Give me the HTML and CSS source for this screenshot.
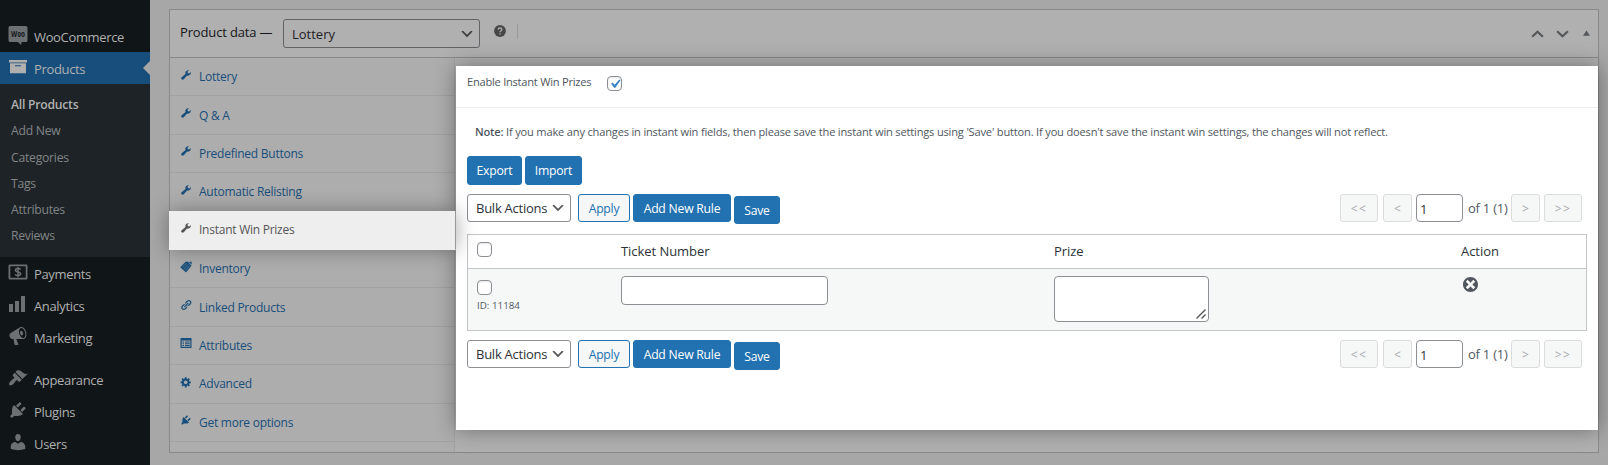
FILE: index.html
```html
<!DOCTYPE html>
<html lang="en">
<head>
<meta charset="utf-8">
<title>Edit product</title>
<link rel="stylesheet" href="styles.css">
</head>
<body>
<svg class="defs" width="0" height="0">
  <symbol id="wrench" viewBox="0 0 20 20"><path d="M16.68 9.77c-1.34 1.34-3.3 1.67-4.95.99l-5.41 6.52c-.99.99-2.59.99-3.58 0s-.99-2.59 0-3.57l6.52-5.42c-.68-1.65-.35-3.61.99-4.95 1.28-1.28 3.12-1.62 4.72-1.06l-2.89 2.89 2.82 2.82 2.86-2.87c.53 1.58.18 3.39-1.08 4.65z"/></symbol>
  <symbol id="plug" viewBox="0 0 20 20"><path d="M13.11 4.36L9.87 7.6 8 5.73l3.24-3.24c.35-.34 1.05-.2 1.56.32.52.51.66 1.21.31 1.55zm-8 1.77l.91-1.12 9.01 9.01-1.19.84c-.71.71-2.63 1.16-3.82 1.16H6.14L4.9 17.26c-.59.59-1.54.59-2.12 0-.59-.58-.59-1.53 0-2.12l1.24-1.24v-3.88c0-1.13.4-3.19 1.09-3.89zm7.26 3.97l3.24-3.24c.34-.35 1.04-.21 1.55.31.52.51.66 1.21.31 1.55l-3.24 3.25z"/></symbol>
  <symbol id="chev" viewBox="0 0 20 20"><path d="M5 6l5 5 5-5 2 1-7 7-7-7 2-1z"/></symbol>
</svg>
<nav class="menu">
  <a class="item"><svg class="ico" viewBox="0 0 20 20"><path d="M2.200 1h15.600C18.600 1 19.500 1.700 19.500 2.800v12.400c0 1-.8 1.800-1.700 1.800h-4.300l-.4 3-3.300-3H2.200C1.200 17 .5 16.200.5 15.200V2.800C.5 1.700 1.200 1 2.200 1z"/><text class="woo" x="10" y="11.800" textLength="14" lengthAdjust="spacingAndGlyphs">Woo</text></svg><span>WooCommerce</span></a>
  <a class="item current"><svg class="ico" viewBox="0 0 20 20"><path d="M19 3v2.500H1V3h18zM2 6.300h16v10H2v-10zm11 3V8.300H7v1h6z"/></svg><span>Products</span></a>
  <div class="submenu">
    <a class="on">All Products</a><a>Add New</a><a>Categories</a><a>Tags</a><a>Attributes</a><a>Reviews</a>
  </div>
  <a class="item"><svg class="ico" viewBox="0 0 20 20"><path fill-rule="evenodd" d="M2 2.500h16c.8 0 1.500.7 1.500 1.500v12c0 .8-.7 1.500-1.500 1.500H2c-.8 0-1.500-.7-1.500-1.500V4c0-.8.700-1.500 1.500-1.500zM2.300 4.300v11.400h15.400V4.300z"/><path class="line" d="M12.600 7.600c-.5-.8-1.500-1-2.600-1-1.500 0-2.600.6-2.600 1.700 0 2.400 5.300 1 5.300 3.500 0 1.100-1.200 1.700-2.700 1.700-1.300 0-2.300-.4-2.800-1.200M10 5v10.200"/></svg><span>Payments</span></a>
  <a class="item"><svg class="ico" viewBox="0 0 20 20"><path d="M17 18V2h-4v16h4zm-6 0V7H7v11h4zm-6 0v-8H1v8h4z"/></svg><span>Analytics</span></a>
  <a class="item"><svg class="ico" viewBox="0 0 20 20"><path d="M18.150 5.940c.46 1.620.38 3.220-.02 4.480-.42 1.280-1.260 2.180-2.300 2.480-.16.060-.26.060-.4.060-.06.020-.12.020-.18.020-.06.020-.14.020-.22.020h-6.800l2.220 5.500c.02.140-.06.260-.14.340-.08.100-.24.160-.34.160H6.950c-.1 0-.26-.06-.34-.16-.08-.08-.16-.2-.14-.34l-1-5.500H4.250l-.02-.02c-.5.060-1.080-.18-1.540-.62s-.88-1.080-1.060-1.880c-.24-.8-.2-1.560-.02-2.200.18-.62.58-1.080 1.060-1.300l.02-.02 9-5.400c.1-.06.18-.1.24-.16.06-.04.14-.08.24-.12.16-.08.28-.12.5-.18 1.040-.3 2.240.1 3.220.98s1.840 2.240 2.260 3.860zm-2.580 5.980h-.02c.4-.1.740-.34 1.040-.7.580-.7.860-1.760.86-3.040 0-.64-.1-1.300-.28-1.980-.34-1.360-1.020-2.500-1.780-3.240s-1.680-1.100-2.460-.88c-.82.220-1.400.96-1.700 2-.32 1.040-.28 2.360.06 3.720.38 1.360 1 2.500 1.800 3.240.78.740 1.620 1.100 2.480.88zm-2.540-7.080c.22-.04.42-.02.62.04.38.16.76.48 1.020 1s.42 1.200.42 1.780c0 .3-.04.56-.12.8-.18.48-.44.84-.86.94-.34.1-.8-.06-1.140-.4s-.64-.86-.78-1.500c-.18-.62-.12-1.240.02-1.720s.48-.84.82-.94z"/></svg><span>Marketing</span></a>
  <a class="item gap"><svg class="ico" viewBox="0 0 20 20"><path d="M14.480 11.060L7.410 3.990l1.500-1.500c.5-.56 2.300-.47 3.510.32 1.210.8 1.430 1.280 2.910 2.100 1.180.64 2.450 1.260 4.450.85zm-.71.71L6.700 4.700 4.930 6.470c-.39.39-.39 1.020 0 1.410l1.060 1.060c.39.39.39 1.030 0 1.420-.6.6-1.430 1.110-2.210 1.690-.35.260-.7.530-1.010.84C1.430 14.230.4 16.080 1.400 17.070c.99 1 2.840-.03 4.180-1.360.31-.31.58-.66.85-1.020.57-.78 1.080-1.610 1.690-2.210.39-.39 1.020-.39 1.410 0l1.060 1.060c.39.39 1.020.39 1.410 0z"/></svg><span>Appearance</span></a>
  <a class="item"><svg class="ico"><use href="#plug"/></svg><span>Plugins</span></a>
  <a class="item"><svg class="ico" viewBox="0 0 20 20"><path d="M10 9.250c-2.270 0-2.730-3.440-2.730-3.440C7 4.020 7.820 2 9.970 2c2.160 0 2.980 2.020 2.710 3.810 0 0-.41 3.440-2.680 3.440zm0 2.570L12.720 10c2.390 0 4.520 2.330 4.520 4.530v2.490s-3.650 1.130-7.240 1.130c-3.650 0-7.240-1.130-7.240-1.130v-2.490c0-2.250 1.940-4.480 4.470-4.480z"/></svg><span>Users</span></a>
</nav>
<main class="content">
  <section class="postbox">
    <header class="head">
      <span class="title">Product data —</span>
      <div class="select type"><span>Lottery</span><svg><use href="#chev"/></svg></div>
      <svg class="help" viewBox="0 0 12 12"><circle cx="6" cy="6" r="5.900"/><path d="M4.200 4.800C4.200 3.500 5 3 6 3s1.900.6 1.900 1.600C7.900 5.800 6 5.700 6 7.200M6 8.300v1.300"/></svg>
      <i class="sep"></i>
      <div class="handles">
        <svg viewBox="0 0 14 8"><path d="M1.200 7L7 1.600 12.800 7"/></svg>
        <svg viewBox="0 0 14 8"><path d="M1.200 1L7 6.400 12.800 1"/></svg>
        <svg class="tri" viewBox="0 0 8 6"><path d="M4 0l4 6H0z"/></svg>
      </div>
    </header>
    <div class="body">
      <ul class="tabs">
        <li><svg><use href="#wrench"/></svg><span>Lottery</span></li>
        <li><svg><use href="#wrench"/></svg><span>Q &amp; A</span></li>
        <li><svg><use href="#wrench"/></svg><span>Predefined Buttons</span></li>
        <li><svg><use href="#wrench"/></svg><span>Automatic Relisting</span></li>
        <li class="active"><svg><use href="#wrench"/></svg><span>Instant Win Prizes</span></li>
        <li><svg viewBox="0 0 12 12"><path d="M.2 6.300L5.600.8l2.100-.2L11.500 4.700 6 11.500zM8.700 1l2.800-.6.400 3.300z"/><path class="hatch" d="M2.200 6.300l4.200-4.200M3.700 8l4.500-4.600M5.200 9.600l4.500-4.800"/></svg><span>Inventory</span></li>
        <li><svg viewBox="0 0 20 20"><path d="M17.740 2.760c1.680 1.690 1.680 4.410 0 6.100l-1.530 1.520c-1.120 1.120-2.700 1.470-4.140 1.090l2.620-2.610.76-.77.76-.76c.84-.84.84-2.200 0-3.040-.84-.85-2.200-.85-3.040 0l-.77.76-3.380 3.380c-.37-1.440-.02-3.020 1.100-4.140l1.520-1.530c1.690-1.680 4.420-1.680 6.100 0zM8.590 13.430l5.340-5.340c.42-.42.42-1.100 0-1.520-.44-.43-1.130-.39-1.530 0l-5.330 5.340c-.42.42-.42 1.100 0 1.520.44.43 1.130.39 1.520 0zm-.76 2.290l4.140-4.150c.38 1.440.03 3.020-1.090 4.140l-1.520 1.530c-1.690 1.680-4.410 1.680-6.100 0-1.680-1.680-1.680-4.420 0-6.100l1.530-1.520c1.120-1.120 2.700-1.470 4.140-1.100l-4.140 4.150c-.85.84-.85 2.200 0 3.050.84.84 2.200.84 3.040 0z"/></svg><span>Linked Products</span></li>
        <li><svg viewBox="0 0 12 12"><path fill-rule="evenodd" d="M.5 1h11v10H.500zM1.700 3.600v6.200h8.600V3.600zM2.500 4.500H4v1H2.500zM5 4.500h4.700v1H5zM2.500 6.200H4v1H2.500zM5 6.200h4.700v1H5zM2.500 7.900H4v1H2.500zM5 7.900h4.700v1H5z"/></svg><span>Attributes</span></li>
        <li><svg viewBox="0 0 20 20"><path d="M18 12h-2.180c-.17.7-.44 1.350-.81 1.930l1.540 1.540-2.100 2.100-1.540-1.540c-.58.360-1.230.630-1.910.79V19H8v-2.180c-.68-.16-1.330-.43-1.910-.79l-1.540 1.540-2.120-2.120 1.540-1.540c-.36-.58-.63-1.230-.79-1.910H1V9.030h2.170c.16-.7.44-1.350.8-1.940L2.430 5.550l2.100-2.100 1.540 1.540c.58-.37 1.240-.64 1.930-.81V2h3v2.180c.68.160 1.330.43 1.910.79l1.540-1.540 2.120 2.120-1.540 1.540c.36.590.64 1.240.8 1.940H18V12zm-8.500 1.500c1.660 0 3-1.340 3-3s-1.340-3-3-3-3 1.340-3 3 1.340 3 3 3z"/></svg><span>Advanced</span></li>
        <li><svg><use href="#plug"/></svg><span>Get more options</span></li>
      </ul>
      <div class="panel">
        <div class="enable"><label>Enable Instant Win Prizes</label><span class="check"><svg viewBox="0 0 20 20"><path d="M14.830 4.890l1.340.94-5.810 8.380H9.020L5.780 9.670l1.340-1.250 2.570 2.400z"/></svg></span></div>
        <p class="note"><b>Note:</b> If you make any changes in instant win fields, then please save the instant win settings using 'Save' button. If you doesn't save the instant win settings, the changes will not reflect.</p>
        <div class="io"><button class="btn primary export">Export</button><button class="btn primary import">Import</button></div>
        <div class="bar">
          <div class="select bulk"><span>Bulk Actions</span><svg><use href="#chev"/></svg></div>
          <button class="btn apply">Apply</button><button class="btn primary add">Add New Rule</button><button class="btn primary save">Save</button>
          <div class="pages"><span class="pg wide">&lt;&lt;</span><span class="pg prev">&lt;</span><span class="num">1</span><span class="of">of 1 (1)</span><span class="pg next">&gt;</span><span class="pg wide">&gt;&gt;</span></div>
        </div>
        <div class="table">
          <div class="tr th"><div><span class="check"></span></div><div>Ticket Number</div><div>Prize</div><div>Action</div></div>
          <div class="tr td"><div><span class="check"></span><small>ID: 11184</small></div><div><span class="field"></span></div><div><span class="area"><svg viewBox="0 0 10 10"><path d="M.5 9.500l9-9M5.500 9.500l4-4"/></svg></span></div><div><svg class="del" viewBox="2 2 16 16"><path d="M10 2c4.420 0 8 3.580 8 8s-3.580 8-8 8-8-3.580-8-8 3.580-8 8-8zm5 11l-3-3 3-3-2-2-3 3-3-3-2 2 3 3-3 3 2 2 3-3 3 3z"/></svg></div></div>
        </div>
        <div class="bar">
          <div class="select bulk"><span>Bulk Actions</span><svg><use href="#chev"/></svg></div>
          <button class="btn apply">Apply</button><button class="btn primary add">Add New Rule</button><button class="btn primary save">Save</button>
          <div class="pages"><span class="pg wide">&lt;&lt;</span><span class="pg prev">&lt;</span><span class="num">1</span><span class="of">of 1 (1)</span><span class="pg next">&gt;</span><span class="pg wide">&gt;&gt;</span></div>
        </div>
      </div>
    </div>
  </section>
</main>
</body>
</html>
```
FILE: styles.css
```css
* { box-sizing: border-box; }
body {
  margin: 0;
  height: 465px;
  overflow: hidden;
  display: flex;
  background: #a7a7a7;
  font: 13px/18px "Open Sans", "Noto Sans", sans-serif;
}
.defs { position: absolute; }
span, label { white-space: nowrap; }

/* Admin menu */
.menu { width: 150px; height: 465px; flex: none; background: #101517; padding-top: 20px; }
.item { position: relative; display: flex; align-items: center; height: 32px; padding-left: 8px; gap: 6px; color: #afb0b0; letter-spacing: -.35px; }
.item span { padding-top: 1px; }
.item.gap { margin-top: 10px; }
.ico { width: 20px; height: 20px; fill: #6d7073; flex: none; margin-top: -3px; }
.ico .line { fill: none; stroke: #6d7073; stroke-width: 1.5; }
.ico .woo { fill: #15191b; font-size: 8px; font-weight: 700; text-anchor: middle; letter-spacing: 0; }
.current { background: #184e7b; }
.current .ico { fill: #b0b0b0; }
.current::after {
  content: "";
  position: absolute;
  right: 0;
  top: 9px;
  border: 7.500px solid transparent;
  border-right-color: #a7a7a7;
  border-left: 0;
}
.submenu { background: #1d2326; height: 173px; padding: 8px 0 0 11px; display: flex; flex-direction: column; letter-spacing: -.25px; }
.submenu a { height: 26.300px; line-height: 26.300px; font-size: 12.200px; color: #818587; }
.submenu .on { color: #b0b0b0; font-weight: 600; }

/* Product data box */
.content { flex: 1; min-width: 0; padding: 9px 9px 0 19px; }
.postbox { height: 444px; border: 1px solid #898989; background: #b0b0b0; display: flex; flex-direction: column; }
.head { height: 48px; flex: none; border-bottom: 1px solid #898989; display: flex; align-items: center; padding: 0 8px 0 10px; }
.title { width: 103px; font-weight: 500; color: #141618; padding-bottom: 4px; letter-spacing: -.15px; }
.select { display: flex; align-items: center; justify-content: space-between; border: 1px solid #8c8f94; border-radius: 3px; padding-left: 8px; }
.select svg { width: 16px; height: 16px; fill: #555; }
.type { width: 197px; height: 29px; border-color: #616366; color: #1e2124; padding-right: 4px; }
.type svg { fill: #3c3c3c; }
.help { width: 12px; height: 12px; margin: -5px 0 0 14px; fill: #464646; }
.help path { fill: none; stroke: #b0b0b0; stroke-width: 1.300; }
.sep { width: 1px; height: 15px; background: #989898; margin: -4px 0 0 11px; }
.handles { margin-left: auto; display: flex; align-items: center; }
.handles svg { width: 13px; height: 8px; margin-left: 12px; fill: none; stroke: #55585b; stroke-width: 2.400; }
.handles .tri { width: 7px; height: 6px; margin-left: 14px; fill: #55585b; stroke: none; margin-top: -1px; }

.body { flex: 1; display: flex; min-height: 0; }
.tabs { list-style: none; margin: 0; padding: 0; width: 285px; flex: none; border-right: 1px solid #a3a3a3; background: #adadad; }
.tabs li {
  height: 38.400px;
  border-bottom: 1px solid #a2a2a2;
  display: flex;
  align-items: center;
  padding: 1px 0 0 10px;
  gap: 7px;
  font-size: 12px;
  letter-spacing: -.25px;
  color: #184e7b;
}
.tabs svg { width: 12px; height: 12px; margin-top: -5px; fill: #184e7b; }
.tabs .hatch { fill: none; stroke: #7b90a3; stroke-width: .6; }
.tabs .active {
  position: relative;
  z-index: 2;
  width: 287px;
  height: 39px;
  margin: -.6px 0 0 -1px;
  padding-left: 11px;
  background: #eee;
  border-bottom-color: #eee;
  border-right: 1px solid #999;
  color: #555;
  box-shadow: 0 0 20px rgba(0, 0, 0, .35);
}
.tabs .active svg { fill: #555; }

/* Instant win panel */
.panel { position: relative; z-index: 1; flex: 1; margin: 8px 0 0 1px; height: 364px; background: #fff; box-shadow: 0 0 20px rgba(0, 0, 0, .38); }
.enable { height: 42px; border-bottom: 1px solid #eee; display: flex; padding: 7px 0 0 11px; font-size: 11.100px; color: #50575e; }
.enable label { width: 140px; letter-spacing: -.24px; }
.enable .check { margin-top: 3px; }
.check { display: block; width: 15px; height: 15px; border: 1px solid #8c8f94; border-radius: 4px; background: #fff; box-shadow: inset 0 1px 2px rgba(0, 0, 0, .1); }
.check svg { display: block; width: 18px; height: 18px; margin: -2.500px; fill: #3582c4; }
.note { margin: 15px 0 15px 19px; font-size: 11.100px; letter-spacing: -.187px; white-space: nowrap; color: #50575e; }
.note b { font-weight: 600; }
.io { display: flex; gap: 3px; padding-left: 11px; margin-bottom: 9px; }
.btn { font: 500 12.200px/26px "Open Sans", "Noto Sans", sans-serif; letter-spacing: -.22px; height: 28px; padding: 1px 0 0; border: 1px solid #2271b1; border-radius: 3px; color: #2271b1; background: #f6f7f7; white-space: nowrap; }
.primary { background: #2271b1; color: #fff; }
.io .btn { height: 29px; }
.export { width: 55px; }
.import { width: 57px; }
.bar { display: flex; padding: 0 16px 0 11px; height: 28px; }
.bulk { width: 104px; height: 28px; color: #2c3338; padding-right: 4px; letter-spacing: -.25px; }
.apply { width: 52px; margin-left: 7px; font-weight: 400; }
.add { width: 98px; margin-left: 3px; }
.save { width: 46px; margin: 2px 0 0 3px; }
.pages { margin-left: auto; display: flex; }
.pg { width: 29px; height: 28px; line-height: 27px; border: 1px solid #dcdcde; border-radius: 3px; background: #f6f7f7; color: #a7aaad; font-size: 12px; text-align: center; }
.wide { width: 38px; letter-spacing: 1.500px; }
.prev { margin-left: 5px; }
.num { width: 47px; margin-left: 4px; border: 1px solid #8c8f94; border-radius: 4px; padding-left: 3px; line-height: 28px; color: #2c3338; }
.of { width: 48px; padding-left: 5px; line-height: 28px; color: #50575e; letter-spacing: -.25px; }
.next { margin-right: 4px; }
.table { margin: 12px 11px 9px; height: 97px; border: 1px solid #c3c4c7; }
.tr { display: grid; grid-template-columns: 144px 433px 407px 1fr; padding-left: 9px; }
.th { height: 34px; border-bottom: 1px solid #c3c4c7; font-weight: 500; line-height: 32px; color: #2c3338; letter-spacing: -.05px; }
.th .check { margin-top: 7px; }
.td { height: 61px; background: #f6f7f7; padding-top: 7px; }
.td .check { margin-top: 4px; }
.td small { display: block; font-size: 9.800px; line-height: 19px; color: #50575e; padding-top: 1px; }
.field { display: block; width: 207px; height: 29px; border: 1px solid #8c8f94; border-radius: 4px; background: #fff; }
.area { display: flex; align-items: flex-end; justify-content: flex-end; width: 155px; height: 46px; padding: 2px; border: 1px solid #8c8f94; border-radius: 4px; background: #fff; }
.area svg { width: 10px; height: 10px; fill: none; stroke: #555; stroke-width: 1.400; }
.del { display: block; width: 15px; height: 15px; margin: 1px 0 0 2px; fill: #50575e; }
```
